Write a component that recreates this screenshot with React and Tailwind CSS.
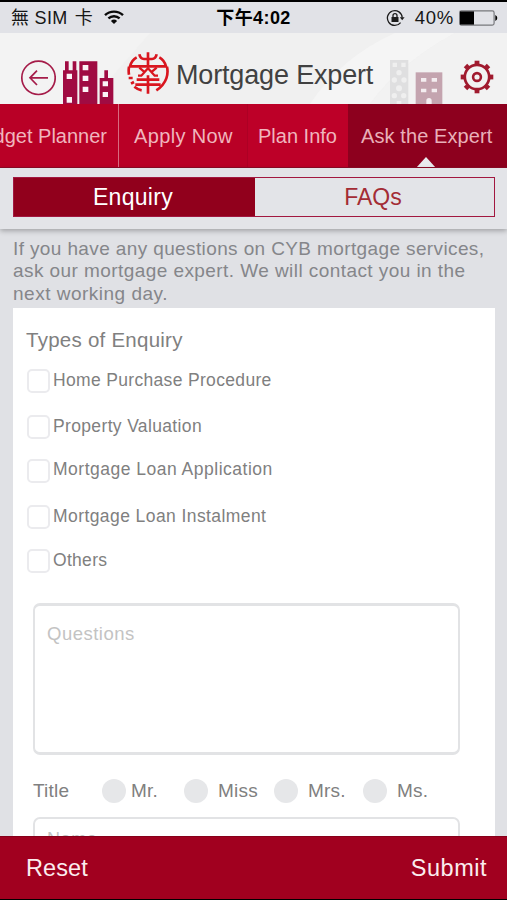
import React, { useState } from 'react';

const ENQUIRY_TYPES = [
    { label: 'Home Purchase Procedure', row: 'h-[46px]', text: 'tracking-[0.33px]' },
    { label: 'Property Valuation', row: 'h-[44px]', text: 'tracking-[0.35px]' },
    { label: 'Mortgage Loan Application', row: 'h-[46px]', text: '-mt-px tracking-[0.5px]' },
    { label: 'Mortgage Loan Instalment', row: 'h-[44px]', text: 'tracking-[0.42px]' },
    { label: 'Others', row: 'h-[54px]', text: 'tracking-[0.3px]' },
];

const TITLES = [
    { label: 'Mr.', item: 'w-[82px]', gap: 'ml-[5px]' },
    { label: 'Miss', item: 'w-[90px]', gap: 'ml-[10px]' },
    { label: 'Mrs.', item: 'w-[89px]', gap: 'ml-[10px]' },
    { label: 'Ms.', item: 'w-[80px]', gap: 'ml-[10px]' },
];

function StatusBar() {
    return (
        <div className="h-[33px] border-t-2 border-black bg-[#e1e2e7] grid grid-cols-[1fr_auto_1fr] items-center px-[10px] text-[18px] leading-[30px] text-[#161616]">
            <div className="flex items-center pt-px">
                <span className="whitespace-pre tracking-[0.3px] pl-px">無 SIM<span className="pl-[2px]"> 卡</span></span>
                <svg className="w-5 h-4 ml-[11px] -mt-[3px]" viewBox="0 0 20 16" fill="none" stroke="#0a0a0a" strokeWidth="2.4">
                    <path d="M1 6.2a13 13 0 0 1 18 0" />
                    <path d="M4.4 9.4a8.2 8.2 0 0 1 11.2 0" />
                    <path d="M10 15 6.9 12a4.6 4.6 0 0 1 6.2 0z" fill="#0a0a0a" stroke="none" />
                </svg>
            </div>
            <span className="font-bold text-[18px] tracking-[0.4px] pt-px text-black">下午4:02</span>
            <div className="flex items-center justify-end">
                <svg className="w-[19px] h-[18px] mr-[10px]" viewBox="0 0 19 18" fill="none" stroke="#1c1c1c" strokeWidth="1.3">
                    <path d="M14.6 13.6A7.4 7.4 0 1 1 16.2 8.6" />
                    <path d="M13.8 8.2h4.8L16.2 11.2z" fill="#1c1c1c" stroke="none" />
                    <rect x="5.5" y="8" width="7" height="5" fill="#1c1c1c" stroke="none" />
                    <path d="M7 8V6.6a2 2 0 0 1 4 0V8" />
                </svg>
                <span className="text-[18.5px] tracking-[0.7px] pt-px">40%</span>
                <svg className="w-[39px] h-4 ml-[5px] -mr-[1px]" viewBox="0 0 39 16">
                    <rect x="0.6" y="0.9" width="34.5" height="14.2" rx="1.8" fill="none" stroke="#77787c" strokeWidth="1.2" />
                    <rect x="1" y="1.4" width="14" height="13.2" fill="#000" />
                    <path d="M36.3 5v6q2-1 2-3t-2-3z" fill="#000" />
                </svg>
            </div>
        </div>
    );
}

function BuildingsLeft() {
    return (
        <svg className="w-[51px] h-[43px]" viewBox="0 0 153 129">
            <path fill="#a00b42" d="M0 129V28h6V1h11v27h12V1h11v27h3v101zM49 129V1h54v128zM110 129V51h14V28h11v23h16v78z" />
            <path fill="#fbf3f6" d="M11 38h16v16H11zM11 108h16v17H11zM59 12h17v16H59zM59 44h17v16H59zM59 77h17v16H59zM119 61h16v15h-16zM119 93h16v15h-16z" />
        </svg>
    );
}

function BuildingsRight() {
    return (
        <svg className="w-[53px] h-[45px]" viewBox="0 0 159 135">
            <path fill="#dfdfe0" d="M0 3h55v132H0z" />
            <g fill="#efefef">
                <path d="M8 11h13v13H8zM34 11h13v13H34z" />
                <circle cx="27" cy="41" r="8" />
                <circle cx="13" cy="63" r="8" />
                <circle cx="42" cy="63" r="8" />
                <circle cx="27" cy="88" r="9" />
                <circle cx="13" cy="110" r="8" />
                <circle cx="41" cy="110" r="8" />
                <path d="M20 126h14v9H20z" />
            </g>
            <path fill="#c4a4af" d="M77 40h80v95H77z" />
            <path fill="#f4edf0" d="M93 57h16v11H93zM125 57h16v11h-16zM93 89h16v11H93zM125 89h16v11h-16zM109 135v-10a8 8 0 0 1 16 0v10z" />
        </svg>
    );
}

function BankLogo() {
    return (
        <svg className="w-[42px] h-[42px]" viewBox="5 6 126 126" fill="none" stroke="#d9161f" strokeWidth="8">
            <path d="M68 7v42M42 13q3 14 14 14h24q11 0 14-14" />
            <path d="M34 22Q19 30 14 49h108Q117 30 102 22" />
            <path d="M11 50q-2 12 0 24M125 50q4 18-2 35-8 22-30 36" />
            <path d="M42 53l14 12M94 53 80 65M38 77h10l20-22 20 22h10" strokeWidth="7" />
            <path d="M34 89h68M30 104h76M68 76v55" />
            <path d="M10 84h12M17 101l9-5M27 110q11 9 22 11" />
        </svg>
    );
}

function GearIcon() {
    return (
        <svg className="w-[34px] h-[34px]" viewBox="-17 -17 34 34" fill="none" stroke="#a01a2e">
            <circle r="12.2" strokeWidth="2.7" />
            <circle r="3.9" strokeWidth="2.6" />
            {[0, 45, 90, 135, 180, 225, 270, 315].map((a) => (
                <path key={a} d="M-2.4-14.6h4.8" strokeWidth="3.4" transform={`rotate(${a})`} />
            ))}
        </svg>
    );
}

function Header() {
    return (
        <header className="relative h-[71px] bg-[#f0f0f0] flex items-end">
            <svg className="absolute inset-0 w-full h-full" viewBox="0 0 507 71" preserveAspectRatio="none">
                <path d="M0 0h150L88 71H0z" fill="#f3f3f3" />
                <path d="M395 0h60Q400 30 370 71h-60Q340 25 395 0z" fill="#f5f5f5" />
                <path d="M455 0h52v71H370Q400 30 455 0z" fill="#f2f2f2" />
            </svg>
            <button className="relative ml-[20px] mb-[8px] w-9 h-9" aria-label="Back">
                <svg className="w-9 h-9" viewBox="0 0 36 36" fill="none" stroke="#a51c49" strokeWidth="1.7">
                    <circle cx="18.5" cy="17.8" r="16.7" />
                    <path d="M28 17.8H10.5M17 10.6l-7 7.2 7 7.2" />
                </svg>
            </button>
            <div className="relative ml-[7px]"><BuildingsLeft /></div>
            <div className="relative ml-[13px] mb-[10px]"><BankLogo /></div>
            <h1 className="relative ml-[7px] mb-[12px] w-[213px] text-[27px] leading-[34px] tracking-[-0.16px] text-[#414141] whitespace-nowrap">Mortgage Expert</h1>
            <div className="relative ml-[1px]"><BuildingsRight /></div>
            <button className="relative ml-[17px] mb-[10px]" aria-label="Settings"><GearIcon /></button>
        </header>
    );
}

function NavTabs() {
    return (
        <nav className="h-[64px] flex bg-[#b90026] border-b border-[#8d0a26] text-[20px] leading-[65px] text-[#f0b5bd] whitespace-nowrap overflow-hidden shrink-0">
            <div className="w-[119px] border-r border-[#d76b80] flex justify-end pr-[11px] shrink-0">Budget Planner</div>
            <div className="w-[129px] border-r border-[#ad0024] pl-[15px] tracking-[0.35px] shrink-0">Apply Now</div>
            <div className="w-[100px] pl-[10px] bg-[#bd0028] shrink-0">Plan Info</div>
            <div className="relative w-[159px] pl-[13px] bg-[#8d001e] tracking-[0.1px] text-[#e9b0b9] shrink-0">
                Ask the Expert
                <svg className="absolute left-[68px] bottom-[-1px] w-5 h-[11px]" viewBox="0 0 20 11">
                    <path d="M0 11 10 0l10 11z" fill="#e9eaee" />
                </svg>
            </div>
        </nav>
    );
}

export default function App() {
    const [tab, setTab] = useState('enquiry');
    const active = 'bg-[#91001c] text-white';
    const idle = 'text-[#a32c35]';

    return (
        <div className="w-[507px] h-[900px] overflow-hidden flex flex-col bg-[#e0e1e5] font-['Liberation_Sans','Noto_Sans_CJK_TC',sans-serif]">
            <StatusBar />
            <Header />
            <NavTabs />

            <div className="relative h-[61px] shrink-0 bg-[#e3e4e8] px-[13px] pt-[9px] pr-[12px] shadow-[0_2px_5px_rgba(0,0,0,0.28)]">
                <div className="h-[40px] flex border border-[#a21840] text-[23px] leading-[37px]">
                    <button onClick={() => setTab('enquiry')} className={`w-[241px] pr-[3px] tracking-[0.3px] ${tab === 'enquiry' ? active : idle}`}>Enquiry</button>
                    <button onClick={() => setTab('faqs')} className={`flex-1 pr-[3px] ${tab === 'faqs' ? active : idle}`}>FAQs</button>
                </div>
            </div>

            <main className="flex-1 min-h-0 overflow-hidden pl-[13px] pr-[12px]">
                <p className="h-[79px] pt-[9px] text-[19px] leading-[22.4px] tracking-[0.38px] text-[#85868a] whitespace-nowrap">
                    If you have any questions on CYB mortgage services,<br />
                    <span className="tracking-[0.43px]">ask our mortgage expert. We will contact you in the</span><br />
                    <span className="tracking-[0.5px]">next working day.</span>
                </p>
                <section className="bg-white h-[600px] pl-[13px] pt-[20px] text-[#808080]">
                    <h2 className="text-[20.5px] leading-[24px] tracking-[0.25px]">Types of Enquiry</h2>
                    <div className="pt-[17px] h-[251px] pl-px">
                        {ENQUIRY_TYPES.map((t) => (
                            <label key={t.label} className={`flex items-start ${t.row}`}>
                                <span className="w-[23px] h-[24px] rounded-[5px] border-2 border-[#ebebee]" />
                                <span className={`ml-[3px] text-[17.5px] leading-[23px] ${t.text}`}>{t.label}</span>
                            </label>
                        ))}
                    </div>
                    <div className="ml-[7px] w-[427px] h-[152px] rounded-[7px] border-2 border-t-[3px] border-b-[3px] border-[#e2e3e5] pl-[12px] pt-[16px] text-[18.5px] leading-[24px] tracking-[0.5px] text-[#c3c3c3]">
                        Questions
                    </div>
                    <div className="ml-[7px] mt-[24px] h-[24px] flex items-center text-[19px] leading-[24px] tracking-[0.2px]">
                        <span className="w-[69px]">Title</span>
                        {TITLES.map((t) => (
                            <label key={t.label} className={`flex items-center ${t.item}`}>
                                <span className="w-[24px] h-[24px] rounded-full bg-[#e6e7e9] shrink-0" />
                                <span className={t.gap}>{t.label}</span>
                            </label>
                        ))}
                    </div>
                    <div className="ml-[7px] mt-[14px] w-[427px] h-[46px] rounded-[7px] border-2 border-[#e2e3e5] pl-[12px] pt-[8px] text-[18px] leading-[24px] tracking-[0.6px] text-[#c3c3c3]">
                        Name
                    </div>
                </section>
            </main>

            <footer className="h-[64px] shrink-0 bg-[#a1001f] border-t border-t-[#86001a] border-b border-b-black flex justify-between items-center pl-[26px] pr-[20px] text-[23.5px] leading-[62px] text-[#fbecee]">
                <button className="tracking-[0.1px]">Reset</button>
                <button className="tracking-[0.5px]">Submit</button>
            </footer>
        </div>
    );
}
